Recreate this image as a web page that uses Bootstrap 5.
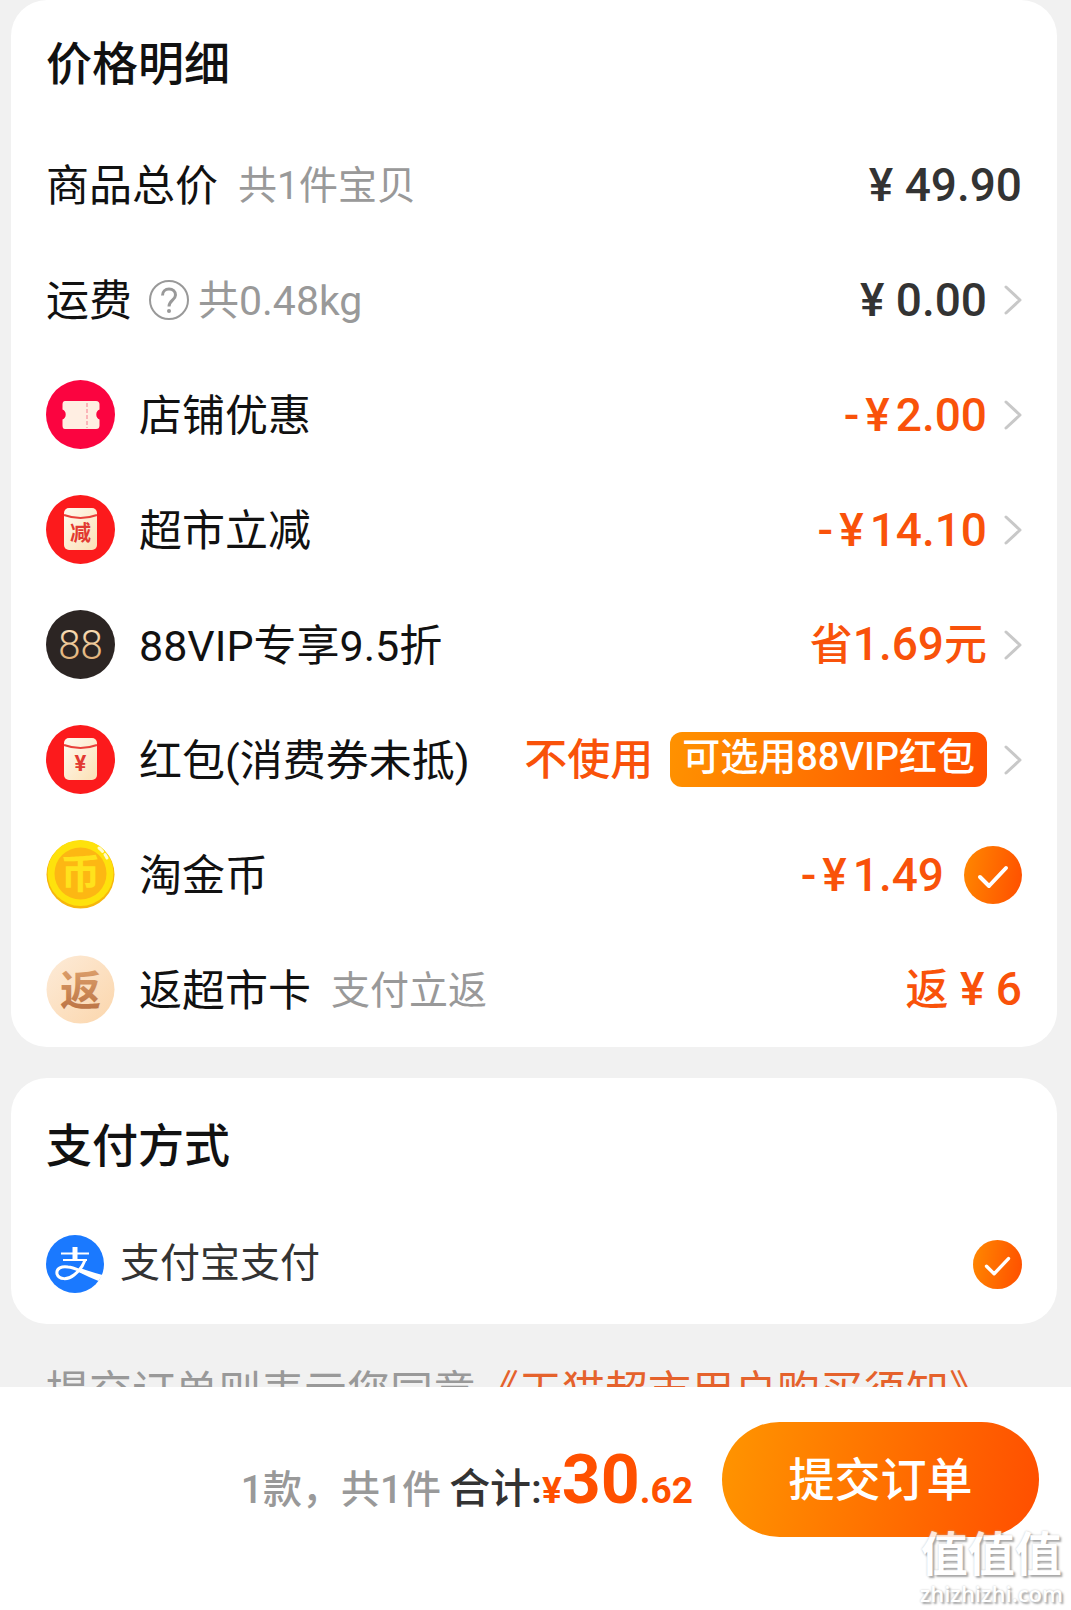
<!DOCTYPE html>
<html lang="zh-CN">
<head>
<meta charset="utf-8">
<meta name="viewport" content="width=device-width, initial-scale=1">
<title>确认订单</title>
<link href="https://cdn.jsdelivr.net/npm/bootstrap@5.3.0/dist/css/bootstrap.min.css" rel="stylesheet">
<style>
  body { font-family: Roboto, "Noto Sans CJK SC", sans-serif; font-size: 43px; line-height: 60px; color: #111; background: #f1f1f1; }
  .order-scroll { scrollbar-width: none; padding: 0 14px 0 11px; }
  .order-scroll::-webkit-scrollbar { display: none; }
  .panel { background: #fff; border-radius: 36px; padding: 0 35px; }
  .panel-title { font-size: 46px; line-height: 60px; font-weight: 500; margin: 0; padding: 34px 0 33px; }
  .pay-panel { margin-top: 31px; }
  .pay-panel .panel-title { padding: 38px 0 28px; }
  .line { height: 115px; width: 100%; padding: 0; border: 0; background: none; color: inherit; text-align: left; }
  .line-icon { width: 69px; height: 69px; margin-right: 24px; flex: none; }
  .line-name { padding-top: 2px; }
  .note { font-size: 39px; color: #999; padding-top: 2px; }
  .note-weight { font-size: 41px; }
  .amount { font-size: 46px; font-weight: 500; color: #333; }
  .amount-off { font-size: 46px; font-weight: 500; color: #f9520a; }
  .amount-word { font-size: 43px; }
  .yen { margin: 0 6px; }
  .chevron { width: 18px; height: 30px; margin-left: 17px; flex: none; }
  .pick-tag { font-size: 38px; line-height: 51px; height: 55px; font-weight: 500; color: #fff; border-radius: 12px; padding: 0 12px; margin-left: 17px; background: linear-gradient(100deg, #ff9200, #ff4e00); }
  .tick { appearance: none; flex: none; border-radius: 50%; margin: 0; width: 58px; height: 58px;
    background: url("data:image/svg+xml,%3Csvg xmlns='http://www.w3.org/2000/svg' viewBox='0 0 58 58'%3E%3Cpath d='M16 31l9 9 17-18' fill='none' stroke='%23fff' stroke-width='4' stroke-linecap='round' stroke-linejoin='round'/%3E%3C/svg%3E") center / 100% no-repeat, linear-gradient(100deg, #ff8800, #ff4e00); }
  .tick-small { width: 49px; height: 49px; }
  .pay-row { height: 120px; }
  .pay-name { font-size: 40px; color: #333; }
  .terms { padding: 38px 35px; color: #999; }
  .terms a { color: #e5622c; text-decoration: none; }
  .submit-bar { background: #fff; height: 223px; padding: 35px 32px 0 0; }
  .summary { font-size: 39px; font-weight: 500; padding-top: 28px; }
  .sum-count { color: #999; }
  .sum-label { color: #333; font-size: 41px; }
  .sum-total { color: #ff5000; font-weight: 700; }
  .sum-small { font-size: 37px; }
  .sum-big { font-size: 68px; }
  .submit-btn { width: 317px; height: 115px; border: 0; border-radius: 58px; color: #fff; font-size: 46px; font-weight: 500; margin-left: 29px; background: linear-gradient(100deg, #ff9500, #ff4e00); }
  .site-stamp { right: 8px; bottom: 4px; color: #fff; font-weight: 700; text-align: center; text-shadow: 2px 2px 2px #999, 0 0 2px #bbb; pointer-events: none; opacity: .85; }
  .stamp-top { font-size: 47px; line-height: 50px; }
  .stamp-url { font-family: "Open Sans", sans-serif; font-weight: 600; font-size: 22px; line-height: 26px; }
</style>
<script src="https://cdn.jsdelivr.net/npm/bootstrap@5.3.0/dist/js/bootstrap.bundle.min.js" defer></script>
</head>
<body class="d-flex flex-column vh-100 overflow-hidden">

<svg class="position-absolute" width="0" height="0" aria-hidden="true">
  <defs>
    <linearGradient id="cream" x1="0" y1="0" x2="1" y2="1"><stop offset="0" stop-color="#fffaf0"/><stop offset="1" stop-color="#fbe0b4"/></linearGradient>
    <linearGradient id="peach" x1="0" y1="0" x2="1" y2="1"><stop offset="0" stop-color="#fdebd8"/><stop offset="1" stop-color="#fbd6ac"/></linearGradient>
    <linearGradient id="bronze" x1="0" y1="0" x2="0" y2="1"><stop offset="0" stop-color="#dda06c"/><stop offset="1" stop-color="#b86f40"/></linearGradient>
    <linearGradient id="gold" x1="0" y1="0" x2="0" y2="1"><stop offset="0" stop-color="#ffe9c4"/><stop offset="1" stop-color="#d9a366"/></linearGradient>
    <symbol id="chev" viewBox="0 0 18 30"><path d="M2 2l14 13L2 28" fill="none" stroke="#c8c8c8" stroke-width="3" stroke-linecap="round" stroke-linejoin="round"/></symbol>
    <symbol id="packet" viewBox="0 0 69 69"><circle cx="34.5" cy="34.5" r="34.5" fill="#fc1a1c"/><rect x="18" y="13" width="33" height="42" rx="5" fill="url(#cream)"/><path d="M18 20q16.500 6 33 0" fill="none" stroke="#e8403a" stroke-width="2"/></symbol>
  </defs>
</svg>

<main class="order-scroll flex-grow-1 overflow-auto">
  <section class="panel">
    <h2 class="panel-title">价格明细</h2>

    <div class="line d-flex align-items-center">
      <span class="line-name">商品总价</span><span class="note ms-3 ps-1">共1件宝贝</span>
      <span class="amount ms-auto">¥ 49.90</span>
    </div>

    <button type="button" class="line d-flex align-items-center">
      <span class="line-name">运费</span>
      <svg class="ms-3 me-2" width="42" height="42" viewBox="0 0 42 42" fill="none" stroke="#999" stroke-width="2" aria-hidden="true"><circle cx="21" cy="21" r="19"/><path d="M14.500 16.500c0-4 2.800-6.500 6.500-6.500s6.500 2.500 6.500 6c0 5-6.500 5.500-6.500 11.500" stroke-width="3"/><circle cx="21" cy="32" r="2" fill="#999" stroke="none"/></svg>
      <span class="note note-weight">共0.48kg</span>
      <span class="amount ms-auto">¥ 0.00</span><svg class="chevron"><use href="#chev"/></svg>
    </button>

    <button type="button" class="line d-flex align-items-center">
      <svg class="line-icon" viewBox="0 0 69 69" aria-hidden="true"><circle cx="34.5" cy="34.5" r="34.5" fill="#fb0440"/><path d="M19 21h31q3.500 0 3.500 3.500v5a5.500 5.500 0 0 0 0 10v6q0 3.500-3.500 3.500H19q-2.500 0-2.500-3.500v-6a5.500 5.500 0 0 0 0-10v-5Q16.500 21 19 21z" fill="#ffeee2"/><path d="M41 23v25" stroke="#fbb4b8" stroke-width="2" stroke-dasharray="4 2"/></svg>
      <span class="line-name">店铺优惠</span>
      <span class="amount-off ms-auto">-<span class="yen">¥</span>2.00</span><svg class="chevron"><use href="#chev"/></svg>
    </button>

    <button type="button" class="line d-flex align-items-center">
      <svg class="line-icon" viewBox="0 0 69 69" aria-hidden="true"><use href="#packet"/><text x="34.500" y="45" font-size="21" font-weight="700" text-anchor="middle" fill="#e23a32">减</text></svg>
      <span class="line-name">超市立减</span>
      <span class="amount-off ms-auto">-<span class="yen">¥</span>14.10</span><svg class="chevron"><use href="#chev"/></svg>
    </button>

    <button type="button" class="line d-flex align-items-center">
      <svg class="line-icon" viewBox="0 0 69 69" aria-hidden="true"><circle cx="34.5" cy="34.5" r="34.5" fill="#2c2523"/><text x="34.500" y="49" font-size="40" font-family="Roboto, sans-serif" font-weight="300" text-anchor="middle" fill="url(#gold)">88</text></svg>
      <span class="line-name">88VIP专享9.5折</span>
      <span class="amount-off ms-auto"><span class="amount-word">省</span>1.69<span class="amount-word">元</span></span><svg class="chevron"><use href="#chev"/></svg>
    </button>

    <button type="button" class="line d-flex align-items-center">
      <svg class="line-icon" viewBox="0 0 69 69" aria-hidden="true"><use href="#packet"/><text x="34.500" y="46" font-size="22" font-weight="700" text-anchor="middle" fill="#e23a32">¥</text></svg>
      <span class="line-name">红包(消费券未抵)</span>
      <span class="amount-off amount-word ms-auto">不使用</span><span class="pick-tag">可选用88VIP红包</span><svg class="chevron"><use href="#chev"/></svg>
    </button>

    <label class="line d-flex align-items-center">
      <svg class="line-icon" viewBox="0 0 69 69" aria-hidden="true"><circle cx="34.5" cy="34.5" r="34" fill="#f7b60c"/><circle cx="34.5" cy="33" r="33" fill="#fee20c"/><circle cx="34.5" cy="33.500" r="26" fill="#fdb713"/><text x="34.500" y="48" font-size="40" font-weight="700" text-anchor="middle" fill="#ffe21c">币</text><path d="M53 8q5 4 8 10" stroke="#fffbd0" stroke-width="3" stroke-linecap="round" stroke-dasharray="5 4" fill="none"/></svg>
      <span class="line-name">淘金币</span>
      <span class="amount-off ms-auto me-3">-<span class="yen">¥</span>1.49</span><input type="checkbox" class="tick ms-1" checked>
    </label>

    <div class="line d-flex align-items-center">
      <svg class="line-icon" viewBox="0 0 69 69" aria-hidden="true"><circle cx="34.5" cy="34.5" r="34" fill="url(#peach)"/><text x="34.500" y="50" font-size="41" font-weight="700" text-anchor="middle" fill="url(#bronze)">返</text></svg>
      <span class="line-name">返超市卡</span><span class="note ms-3 ps-1">支付立返</span>
      <span class="amount-off ms-auto"><span class="amount-word">返</span> ¥ 6</span>
    </div>
  </section>

  <section class="panel pay-panel">
    <h2 class="panel-title">支付方式</h2>
    <label class="pay-row d-flex align-items-center">
      <svg width="58" height="58" viewBox="0 0 58 58" aria-hidden="true"><circle cx="29" cy="29" r="29" fill="#1a79ff"/><g fill="none" stroke="#fff"><path d="M15 18.500h28M17 25h24" stroke-width="2"/><path d="M29 12v13" stroke-width="5"/><path d="M39 25c-2 6-6 11-11 15-6 5-15 5-17-1-1-6 5-8 11-7 6 .5 12 4 18 6" stroke-width="3"/></g><path d="M34 33q11 4 22.500 7l-4 6q-10-4-22-10z" fill="#fff"/></svg>
      <span class="pay-name ms-3">支付宝支付</span>
      <input type="radio" name="pay" class="tick tick-small ms-auto" checked>
    </label>
  </section>

  <p class="terms text-nowrap mb-0">提交订单则表示您同意<a href="#">《天猫超市用户购买须知》</a></p>
</main>

<footer class="submit-bar position-relative flex-shrink-0 d-flex align-items-start justify-content-end">
  <div class="summary d-flex align-items-baseline text-nowrap">
    <span class="sum-count me-2">1款，共1件</span><span class="sum-label">合计:</span><span class="sum-total"><span class="sum-small">¥</span><span class="sum-big">30</span><span class="sum-small">.62</span></span>
  </div>
  <button type="submit" class="submit-btn">提交订单</button>
  <div class="site-stamp position-absolute">
    <div class="stamp-top">值值值</div>
    <div class="stamp-url">zhizhizhi.com</div>
  </div>
</footer>
</body>
</html>
